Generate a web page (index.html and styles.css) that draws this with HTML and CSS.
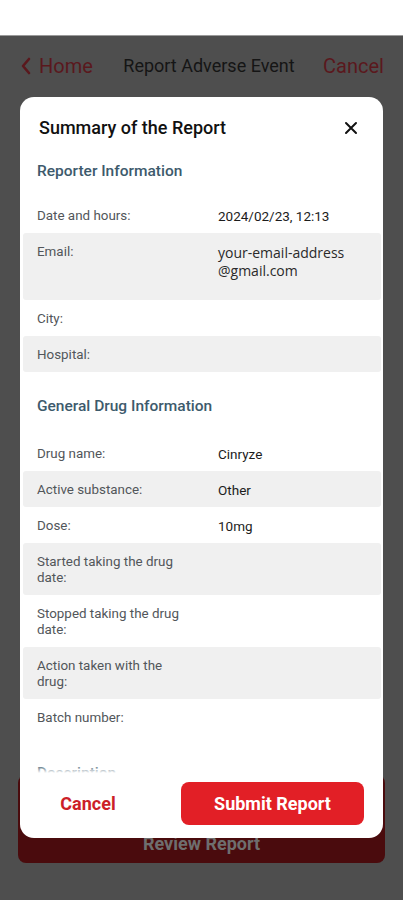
FILE: index.html
```html
<!DOCTYPE html>
<html>
<head>
<meta charset="utf-8">
<link rel="stylesheet" href="styles.css">
</head>
<body>
<div class="statusbar"></div>
<div class="app">
  <nav class="nav">
    <div class="nav-back">
      <svg class="chev" viewBox="0 0 12 18" width="12" height="18"><path d="M9 2 L3 9 L9 16" fill="none" stroke="currentColor" stroke-width="2.6" stroke-linecap="round" stroke-linejoin="round"/></svg>
      <span>Home</span>
    </div>
    <div class="nav-title">Report Adverse Event</div>
    <div class="nav-cancel">Cancel</div>
  </nav>
  <div class="review-btn">Review Report</div>
</div>

<div class="modal">
  <div class="modal-head">
    <div class="modal-title">Summary of the Report</div>
    <svg class="close" viewBox="0 0 14 14" width="14" height="14"><path d="M2 2 L12 12 M12 2 L2 12" stroke="#111" stroke-width="2" stroke-linecap="round"/></svg>
  </div>
  <div class="modal-body">
    <div class="section-title first">Reporter Information</div>
    <div class="row"><div class="label">Date and hours:</div><div class="value">2024/02/23, 12:13</div></div>
    <div class="row alt email"><div class="label">Email:</div><div class="value">your-email-address<wbr>@gmail.com</div></div>
    <div class="row"><div class="label">City:</div><div class="value"></div></div>
    <div class="row alt"><div class="label">Hospital:</div><div class="value"></div></div>

    <div class="section-title">General Drug Information</div>
    <div class="row"><div class="label">Drug name:</div><div class="value">Cinryze</div></div>
    <div class="row alt"><div class="label">Active substance:</div><div class="value">Other</div></div>
    <div class="row"><div class="label">Dose:</div><div class="value">10mg</div></div>
    <div class="row alt"><div class="label">Started taking the drug date:</div><div class="value"></div></div>
    <div class="row"><div class="label">Stopped taking the drug date:</div><div class="value"></div></div>
    <div class="row alt"><div class="label">Action taken with the drug:</div><div class="value"></div></div>
    <div class="row"><div class="label">Batch number:</div><div class="value"></div></div>

    <div class="section-title last">Description</div>
  </div>
  <div class="modal-foot">
    <button class="btn-cancel">Cancel</button>
    <button class="btn-submit">Submit Report</button>
  </div>
</div>
</body>
</html>
```

FILE: styles.css
```css
* { box-sizing: border-box; }
html, body { margin: 0; padding: 0; }
body {
  width: 403px;
  height: 900px;
  background: #4e4e4e;
  font-family: Roboto, "Liberation Sans", sans-serif;
  overflow: hidden;
  position: relative;
}
.statusbar {
  height: 36px;
  background: #ffffff;
  border-bottom: 1px solid #9a9a9a;
}
.app {
  height: 827px;
  display: flex;
  flex-direction: column;
}
.nav {
  display: flex;
  align-items: center;
  justify-content: space-between;
  padding: 17px 19px 0 20px;
  height: 42px;
}
.nav-back {
  display: flex;
  align-items: center;
  gap: 7px;
  color: #5a181d;
  font-size: 20px;
}
.chev { display: block; }
.nav-title {
  color: #151515;
  font-size: 18px;
  margin-left: 2px;
}
.nav-cancel {
  color: #5a181d;
  font-size: 20px;
}
.review-btn {
  margin: auto 18px 0 18px;
  height: 88px;
  background: #4a0b0d;
  border-radius: 8px;
  color: #6e6e6e;
  font-size: 18px;
  font-weight: 700;
  text-align: center;
  padding-top: 59px;
  line-height: 20px;
}

.modal {
  position: absolute;
  top: 97px;
  left: 20px;
  width: 363px;
  height: 741px;
  background: #fff;
  border-radius: 14px;
  display: flex;
  flex-direction: column;
  overflow: hidden;
}
.modal-head {
  display: flex;
  align-items: center;
  justify-content: space-between;
  padding: 20px 25px 0 19px;
  height: 42px;
  flex: none;
}
.modal-title {
  font-size: 18px;
  font-weight: 500;
  line-height: 22px;
  color: #111;
}
.close { display: block; }
.modal-body {
  flex: 1;
  overflow: hidden;
  padding: 0 2px 0 3px;
  position: relative;
}
.modal-body::after {
  content: "";
  position: absolute;
  left: 0;
  right: 0;
  bottom: 0;
  height: 8px;
  background: linear-gradient(rgba(255,255,255,0), #fff);
}
.section-title {
  font-size: 15.5px;
  font-weight: 500;
  line-height: 20px;
  color: #3d5a6c;
  padding-left: 14px;
  margin: 24px 0 19px;
}
.section-title.first {
  margin: 22px 0 16px;
}
.section-title.last {
  margin-top: 28px;
}
.row {
  display: grid;
  grid-template-columns: 150px 1fr;
  column-gap: 31px;
  padding: 11px 12px 9px 14px;
  border-radius: 3px;
  font-size: 13.4px;
  line-height: 16px;
}
.row.alt { background: #f0f0f0; }
.row.email { padding-bottom: 20px; }
.label { color: #52565a; }
.value { color: #1c1c1c; font-size: 13.5px; }
.row.email .value {
  font-family: "Open Sans", Roboto, sans-serif;
  font-size: 14px;
  line-height: 18px;
  color: #2a2a2a;
}
.modal-foot {
  flex: none;
  height: 65px;
  display: grid;
  grid-template-columns: 136px 183px;
  column-gap: 25px;
  padding: 9px 19px 13px 0;
}
.btn-cancel {
  border: 0;
  background: transparent;
  color: #cc1f28;
  font-family: Roboto, "Liberation Sans", sans-serif;
  font-size: 18px;
  font-weight: 700;
  padding: 0;
}
.btn-submit {
  border: 0;
  background: #e21f26;
  color: #fff;
  border-radius: 8px;
  font-family: Roboto, "Liberation Sans", sans-serif;
  font-size: 18px;
  font-weight: 700;
  padding: 0;
}
```
